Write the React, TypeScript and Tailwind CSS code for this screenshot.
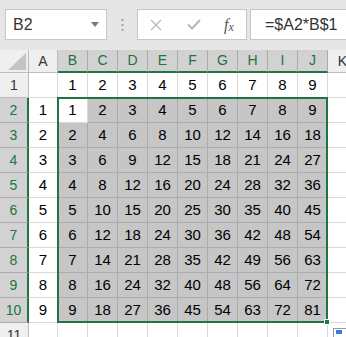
import React from 'react';

const COLS = ['A', 'B', 'C', 'D', 'E', 'F', 'G', 'H', 'I', 'J', 'K'];
const ROWS = Array.from({ length: 11 }, (_, i) => i + 1);

// value shown in a cell (c: 0 = A)
function cellValue(r: number, c: number): string {
  if (r === 1) return c >= 1 && c <= 9 ? String(c) : '';
  if (r >= 2 && r <= 10) {
    if (c === 0) return String(r - 1);
    if (c <= 9) return String((r - 1) * c);
  }
  return '';
}

const isSel = (r: number, c: number) => r >= 2 && r <= 10 && c >= 1 && c <= 9 && !(r === 2 && c === 1);

function FormulaBar() {
  return (
    <div className="h-[50px] flex items-start pt-[9px] pl-[5px]">
      <div className="w-[102px] h-[31px] shrink-0 bg-white border border-[#c6c6c6] flex items-center justify-between pl-[7px] pr-[7px]">
        <span className="text-[16px] text-[#333] leading-none">B2</span>
        <svg width="8" height="5" viewBox="0 0 8 5">
          <polygon points="0,0 8,0 4,5" fill="#7a7a7a" />
        </svg>
      </div>
      <div className="w-[30px] h-[31px] shrink-0 flex items-center justify-center">
        <svg width="3" height="12" viewBox="0 0 3 12">
          <rect x="0.5" y="0" width="2" height="2" fill="#a0a0a0" />
          <rect x="0.5" y="5" width="2" height="2" fill="#a0a0a0" />
          <rect x="0.5" y="10" width="2" height="2" fill="#a0a0a0" />
        </svg>
      </div>
      <div className="w-[110px] h-[31px] shrink-0 bg-white border border-[#c6c6c6] flex items-center">
        <div className="w-[36px] flex justify-center">
          <svg width="12" height="12" viewBox="0 0 12 12">
            <path d="M1 1 L11 11 M11 1 L1 11" stroke="#b8b8b8" strokeWidth="1.3" fill="none" />
          </svg>
        </div>
        <div className="w-[40px] flex justify-center">
          <svg width="14" height="11" viewBox="0 0 14 11">
            <path d="M1 5.5 L5 9.5 L13 1" stroke="#b8b8b8" strokeWidth="2" fill="none" />
          </svg>
        </div>
        <div className="w-[30px] flex justify-center items-end font-['Liberation_Serif',serif] italic text-[#555]">
          <span className="text-[16px] leading-none">f</span>
          <span className="text-[12px] leading-none">x</span>
        </div>
      </div>
      <div className="ml-[3px] flex-1 h-[31px] bg-white border border-r-0 border-[#c6c6c6] flex items-center pl-[14px]">
        <span className="text-[16px] text-[#333] leading-none">=$A2*B$1</span>
      </div>
    </div>
  );
}

function HeaderRow() {
  return (
    <div className="flex h-[23px]">
      <div className="w-[29px] shrink-0 bg-[#efefef] border-r border-b border-[#bcbcbc] flex items-end justify-end pr-[2px] pb-[2px]">
        <svg width="18" height="17" viewBox="0 0 18 17">
          <polygon points="18,0 18,17 0,17" fill="#c4c4c4" />
        </svg>
      </div>
      {COLS.map((col, c) => {
        const sel = c >= 1 && c <= 9;
        return (
          <div
            key={col}
            className={
              c === 0
                ? 'w-[29px] shrink-0 bg-[#efefef] border-r border-b border-[#bcbcbc] flex items-center justify-center text-[14px] text-[#333]'
                : sel
                  ? 'w-[30px] shrink-0 bg-[#d2d2d2] border-r border-[#ababab] border-b-2 border-b-[#217346] flex items-center justify-center text-[14px] text-[#217346]'
                  : 'w-[30px] shrink-0 bg-[#efefef] border-r border-b border-[#bcbcbc] flex items-center justify-center text-[14px] text-[#333]'
            }
          >
            {col}
          </div>
        );
      })}
    </div>
  );
}

function DataRow({ r }: { r: number }) {
  const selRow = r >= 2 && r <= 10;
  return (
    <div className="flex h-[25px]">
      <div
        className={
          selRow
            ? 'w-[29px] shrink-0 bg-[#d2d2d2] border-b border-[#ababab] border-r-2 border-r-[#217346] flex items-center justify-center text-[14px] text-[#217346]'
            : 'w-[29px] shrink-0 bg-[#efefef] border-b border-r border-[#bcbcbc] flex items-center justify-center text-[14px] text-[#333]'
        }
      >
        {r}
      </div>
      {COLS.map((col, c) => (
        <div
          key={col}
          className={
            (c === 0 ? 'w-[29px] ' : 'w-[30px] ') +
            (isSel(r, c)
              ? 'shrink-0 bg-[#c6c6c6] border-r border-b border-[#ababab] flex items-center justify-center text-[15px] text-black'
              : 'shrink-0 bg-white border-r border-b border-[#d9d9d9] flex items-center justify-center text-[15px] text-black')
          }
        >
          {cellValue(r, c)}
        </div>
      ))}
    </div>
  );
}

export default function App() {
  return (
    <div className="relative w-[346px] h-[337px] overflow-hidden bg-[#e6e6e6] font-['Liberation_Sans',Arial,sans-serif]">
      <FormulaBar />
      <div className="relative bg-white">
        <HeaderRow />
        {ROWS.map((r) => (
          <DataRow key={r} r={r} />
        ))}
        {/* selection outline B2:J10 */}
        <div className="absolute left-[57px] top-[47px] w-[271px] h-[226px] border-2 border-[#217346] pointer-events-none">
          <div className="absolute right-[-4px] bottom-[-4px] w-[6px] h-[6px] bg-[#217346] border border-white" />
        </div>
      </div>
      {/* quick analysis button */}
      <div className="absolute left-[333px] top-[328px] w-[16px] h-[12px] bg-white border border-[#9a9a9a]">
        <div className="ml-[2px] mt-[1px] w-[6px] h-[4px] bg-[#3d7bd9]" />
      </div>
    </div>
  );
}
